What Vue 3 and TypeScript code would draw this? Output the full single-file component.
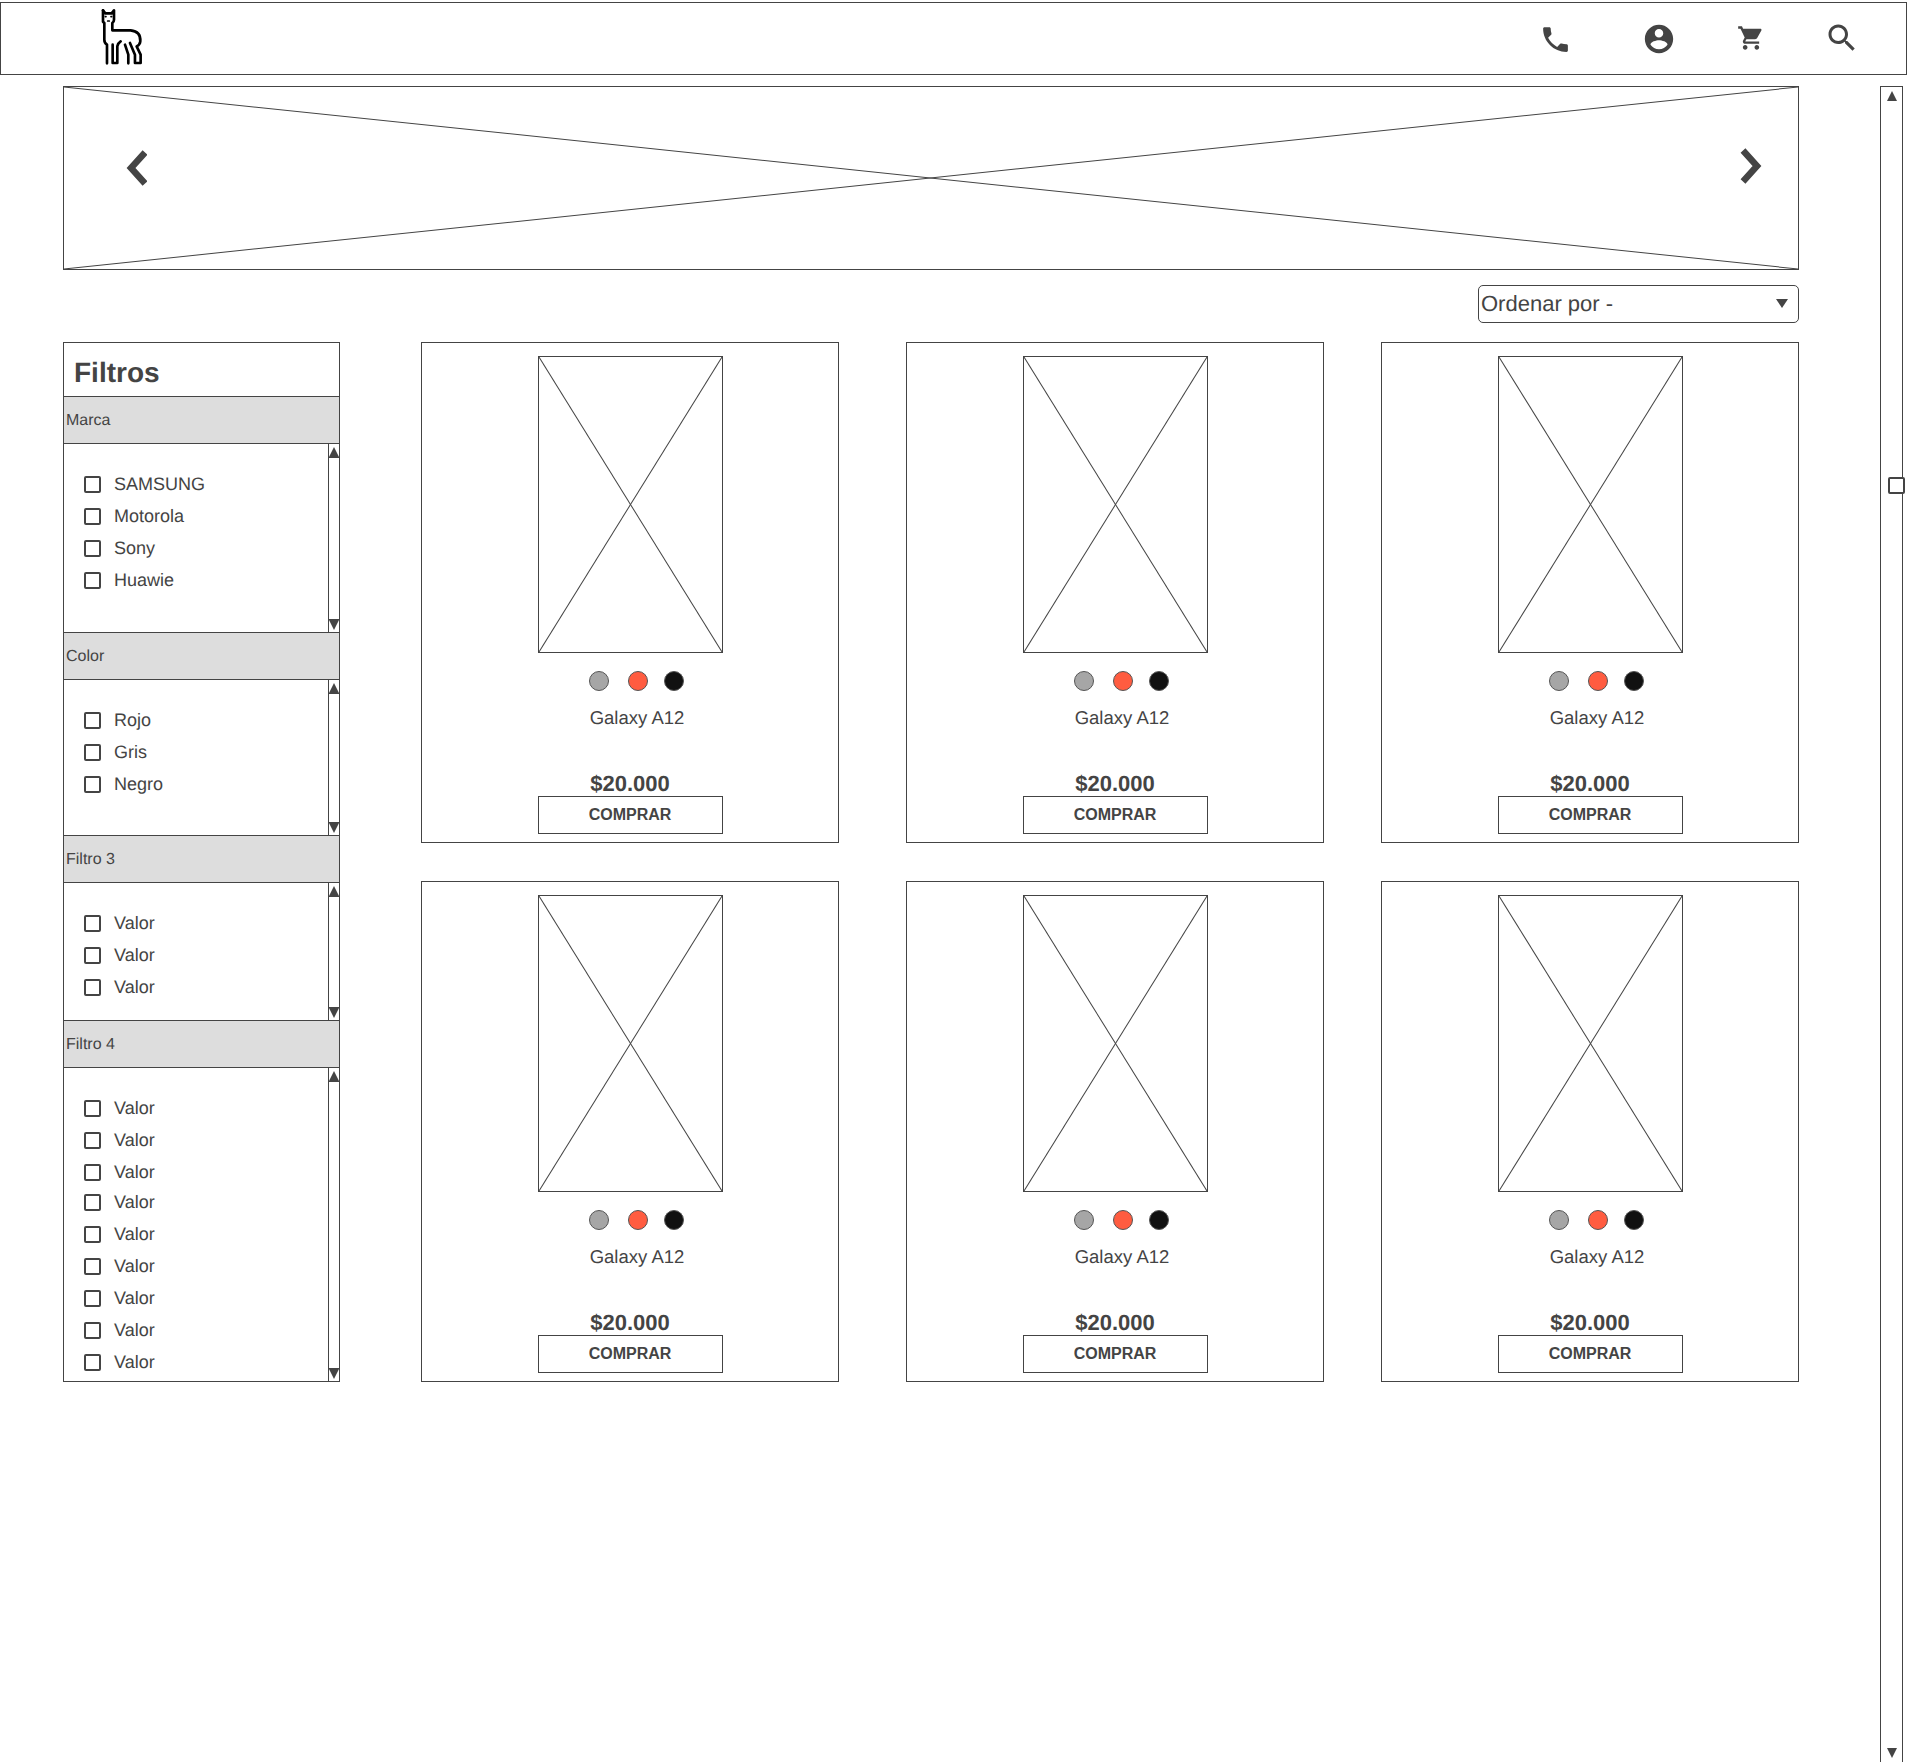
<script setup lang="ts">
interface FilterGroup {
  title: string
  values: string[]
  bodyHeight: number
}

const filters: FilterGroup[] = [
  { title: 'Marca', values: ['SAMSUNG', 'Motorola', 'Sony', 'Huawie'], bodyHeight: 188 },
  { title: 'Color', values: ['Rojo', 'Gris', 'Negro'], bodyHeight: 155 },
  { title: 'Filtro 3', values: ['Valor', 'Valor', 'Valor'], bodyHeight: 137 },
  { title: 'Filtro 4', values: Array(9).fill('Valor'), bodyHeight: 313 }
]

const products = Array.from({ length: 6 }, (_, i) => ({
  id: i,
  name: 'Galaxy A12',
  price: '$20.000'
}))
</script>

<template>
  <div class="page">
    <header class="topbar">
      <svg class="logo" viewBox="300 25 130 170" fill="none" stroke="#000" stroke-width="8" stroke-linecap="round" stroke-linejoin="round">
        <path d="M309 32 L316 41 H335 L342 32 V60 Q342 66 337 70 V92 H392 Q423 95 421 125 Q420 135 410 140 L422 165 V190 H405 V165 L390 130" />
        <path d="M309 32 V66 L313 70 V120 Q313 130 321 135 V191" />
        <path d="M338 135 V190 H352 V140 Q354 130 362 125" />
        <path d="M375 135 L385 165 V191" />
        <path d="M316 51 H318 M333 51 H335 M323 64 H328" stroke-width="5" />
      </svg>
      <svg class="icon icon-phone" viewBox="0 0 24 24"><path d="M6.62 10.79c1.44 2.83 3.76 5.14 6.59 6.59l2.2-2.2c.27-.27.67-.36 1.02-.24 1.12.37 2.33.57 3.57.57.55 0 1 .45 1 1V20c0 .55-.45 1-1 1-9.39 0-17-7.61-17-17 0-.55.45-1 1-1h3.5c.55 0 1 .45 1 1 0 1.25.2 2.45.57 3.57.11.35.03.74-.25 1.02l-2.2 2.2z" /></svg>
      <svg class="icon icon-account" viewBox="0 0 24 24"><path d="M12 2C6.48 2 2 6.48 2 12s4.48 10 10 10 10-4.48 10-10S17.52 2 12 2zm0 3c1.66 0 3 1.34 3 3s-1.34 3-3 3-3-1.34-3-3 1.34-3 3-3zm0 14.2c-2.5 0-4.71-1.28-6-3.22.03-1.99 4-3.08 6-3.08 1.99 0 5.97 1.09 6 3.08-1.29 1.94-3.5 3.22-6 3.22z" /></svg>
      <svg class="icon icon-cart" viewBox="0 0 24 24"><path d="M7 18c-1.1 0-1.99.9-1.99 2S5.9 22 7 22s2-.9 2-2-.9-2-2-2zM1 2v2h2l3.6 7.59-1.35 2.45c-.16.28-.25.61-.25.96 0 1.1.9 2 2 2h12v-2H7.42c-.14 0-.25-.11-.25-.25l.03-.12.9-1.63h7.45c.75 0 1.41-.41 1.75-1.03l3.58-6.49c.08-.14.12-.31.12-.48 0-.55-.45-1-1-1H5.21l-.94-2H1zm16 16c-1.1 0-1.99.9-1.99 2s.89 2 1.99 2 2-.9 2-2-.9-2-2-2z" /></svg>
      <svg class="icon icon-search" viewBox="0 0 24 24"><path d="M15.5 14h-.79l-.28-.27C15.41 12.59 16 11.11 16 9.5 16 5.91 13.09 3 9.5 3S3 5.91 3 9.5 5.91 16 9.5 16c1.61 0 3.09-.59 4.23-1.57l.27.28v.79l5 4.99L20.49 19l-4.99-5zm-6 0C7.01 14 5 11.99 5 9.5S7.01 5 9.5 5 14 7.01 14 9.5 11.99 14 9.5 14z" /></svg>
    </header>

    <div class="layout">
      <main class="main">
        <section class="banner">
          <svg class="cross" viewBox="0 0 100 100" preserveAspectRatio="none">
            <line x1="0" y1="0" x2="100" y2="100" />
            <line x1="100" y1="0" x2="0" y2="100" />
          </svg>
          <svg class="chevron chevron-left" viewBox="0 0 22 36"><path d="M20 2.5 L6 18 L20 33.5" /></svg>
          <svg class="chevron chevron-right" viewBox="0 0 22 36"><path d="M3 2.5 L17 18 L3 33.5" /></svg>
        </section>

        <div class="sort">
          <span>Ordenar por -</span>
          <i class="tri tri-sort"></i>
        </div>

        <div class="content">
          <aside class="sidebar">
            <h2 class="sidebar-title">Filtros</h2>
            <div v-for="group in filters" :key="group.title" class="group">
              <div class="group-head">{{ group.title }}</div>
              <div class="group-body" :style="{ height: group.bodyHeight + 'px' }">
                <ul class="group-list">
                  <li v-for="(value, i) in group.values" :key="i" class="check-row">
                    <span class="check"></span>
                    <span>{{ value }}</span>
                  </li>
                </ul>
                <div class="mini-scroll">
                  <span class="mini-btn mini-btn-up"><i class="tri tri-up"></i></span>
                  <span class="mini-btn mini-btn-down"><i class="tri tri-down"></i></span>
                </div>
              </div>
            </div>
          </aside>

          <section class="products">
            <article v-for="product in products" :key="product.id" class="card">
              <div class="thumb">
                <svg class="cross" viewBox="0 0 100 100" preserveAspectRatio="none">
                  <line x1="0" y1="0" x2="100" y2="100" />
                  <line x1="100" y1="0" x2="0" y2="100" />
                </svg>
              </div>
              <div class="swatches">
                <span class="swatch gray"></span>
                <span class="swatch red"></span>
                <span class="swatch black"></span>
              </div>
              <div class="name">{{ product.name }}</div>
              <div class="price">{{ product.price }}</div>
              <button class="buy" type="button">COMPRAR</button>
            </article>
          </section>
        </div>
      </main>

      <div class="page-scroll">
        <i class="tri tri-up"></i>
        <i class="tri tri-down"></i>
        <span class="thumb-handle"></span>
      </div>
    </div>
  </div>
</template>

<style scoped>
.page {
  width: 1907px;
  height: 1762px;
  padding-top: 2px;
  box-sizing: border-box;
  overflow: hidden;
  background: #fff;
  color: #444;
  font-family: "Liberation Sans", Arial, sans-serif;
  text-rendering: geometricPrecision;
}

.page *,
.page *::before {
  box-sizing: border-box;
}

.topbar {
  display: flex;
  align-items: flex-start;
  height: 73px;
  border: 1px solid #444;
}

.logo {
  width: 43.3px;
  height: 56.7px;
  margin: 5px 0 0 99px;
  flex: none;
}

.icon {
  flex: none;
  fill: #444;
}

.icon-phone {
  width: 33px;
  height: 33px;
  margin: 20px 0 0 1396px;
}

.icon-account {
  width: 34px;
  height: 34px;
  margin: 19px 0 0 70px;
}

.icon-cart {
  width: 28px;
  height: 28px;
  margin: 21px 0 0 61px;
}

.icon-search {
  width: 36px;
  height: 36px;
  margin: 17px 0 0 59px;
}

.layout {
  display: flex;
  margin-top: 11px;
  padding-left: 63px;
}

.main {
  display: flex;
  flex-direction: column;
  width: 1736px;
  flex: none;
}

.banner {
  position: relative;
  height: 184px;
  border: 1px solid #444;
}

.cross {
  display: block;
  width: 100%;
  height: 100%;
}

.cross line {
  stroke: #444;
  stroke-width: 1;
  vector-effect: non-scaling-stroke;
}

.chevron {
  position: absolute;
  width: 22px;
  height: 36px;
  fill: none;
  stroke: #444;
  stroke-width: 6.5;
}

.chevron-left {
  left: 61px;
  top: 63px;
}

.chevron-right {
  right: 36px;
  top: 61px;
}

.sort {
  position: relative;
  align-self: flex-end;
  width: 321px;
  height: 38px;
  margin-top: 15px;
  padding-left: 2px;
  border: 1px solid #444;
  border-radius: 5px;
  font-size: 22px;
  line-height: 36px;
}

.tri {
  display: block;
  width: 0;
  height: 0;
  border-left: 5px solid transparent;
  border-right: 5px solid transparent;
}

.tri-up {
  border-bottom: 10px solid #444;
}

.tri-down {
  border-top: 10px solid #444;
}

.tri-sort {
  position: absolute;
  right: 10px;
  top: 13px;
  border-left-width: 6px;
  border-right-width: 6px;
  border-top: 9px solid #444;
}

.content {
  display: flex;
  align-items: flex-start;
  margin-top: 19px;
}

.sidebar {
  width: 277px;
  flex: none;
  border: 1px solid #444;
}

.sidebar-title {
  height: 53px;
  margin: 0;
  padding: 8px 0 0 10px;
  font-size: 28px;
  font-weight: 700;
  line-height: 44px;
}

.group-head {
  height: 48px;
  padding-left: 2px;
  border-top: 1px solid #444;
  border-bottom: 1px solid #444;
  background: #ddd;
  font-size: 16px;
  line-height: 47px;
}

.group-body {
  display: flex;
  justify-content: space-between;
}

.group:last-child .check-row:nth-child(3) {
  margin-bottom: -2px;
}

.group-list {
  margin: 0;
  padding: 24px 0 0 20px;
  list-style: none;
}

.check-row {
  display: flex;
  align-items: center;
  gap: 13px;
  height: 32px;
  font-size: 18px;
}

.check {
  width: 17px;
  height: 17px;
  border: 2px solid #444;
  border-radius: 2px;
}

.mini-scroll {
  display: flex;
  flex-direction: column;
  justify-content: space-between;
  width: 11px;
  border-left: 1px solid #444;
}

.mini-btn {
  display: flex;
  justify-content: center;
  height: 14px;
}

.mini-btn-up {
  align-items: flex-end;
  border-bottom: 1px solid #444;
}

.mini-btn-down {
  align-items: flex-start;
  height: 13px;
  border-top: 1px solid #444;
}

.products {
  display: grid;
  grid-template-columns: 485px 475px 418px;
  row-gap: 38px;
  margin-left: 81px;
}

.card {
  display: flex;
  flex-direction: column;
  align-items: center;
  width: 418px;
  height: 501px;
  padding-top: 13px;
  border: 1px solid #444;
}

.thumb {
  width: 185px;
  height: 297px;
  border: 1px solid #444;
}

.swatches {
  display: flex;
  margin-top: 18px;
  padding-left: 13px;
}

.swatch {
  width: 20px;
  height: 20px;
  border: 1px solid #555;
  border-radius: 50%;
}

.gray {
  background: #a6a6a6;
  margin-right: 19px;
}

.red {
  background: #ff5c40;
  margin-right: 16px;
}

.black {
  background: #111;
}

.name {
  margin-top: 17px;
  padding-left: 14px;
  font-size: 18.5px;
  line-height: 20px;
}

.price {
  margin-top: 44px;
  font-size: 22px;
  font-weight: 700;
  line-height: 24px;
}

.buy {
  width: 185px;
  height: 38px;
  padding: 0;
  border: 1px solid #444;
  background: #fff;
  color: #444;
  font-family: inherit;
  font-size: 16px;
  font-weight: 700;
}

.page-scroll {
  position: relative;
  display: flex;
  flex-direction: column;
  align-items: center;
  justify-content: space-between;
  width: 23px;
  height: 1676px;
  margin-left: 81px;
  padding: 4px 0;
  border: 1px solid #444;
  border-bottom: none;
}

.thumb-handle {
  position: absolute;
  left: 7px;
  top: 390px;
  width: 17px;
  height: 17px;
  border: 2px solid #444;
  border-radius: 2px;
  background: #fff;
}
</style>
